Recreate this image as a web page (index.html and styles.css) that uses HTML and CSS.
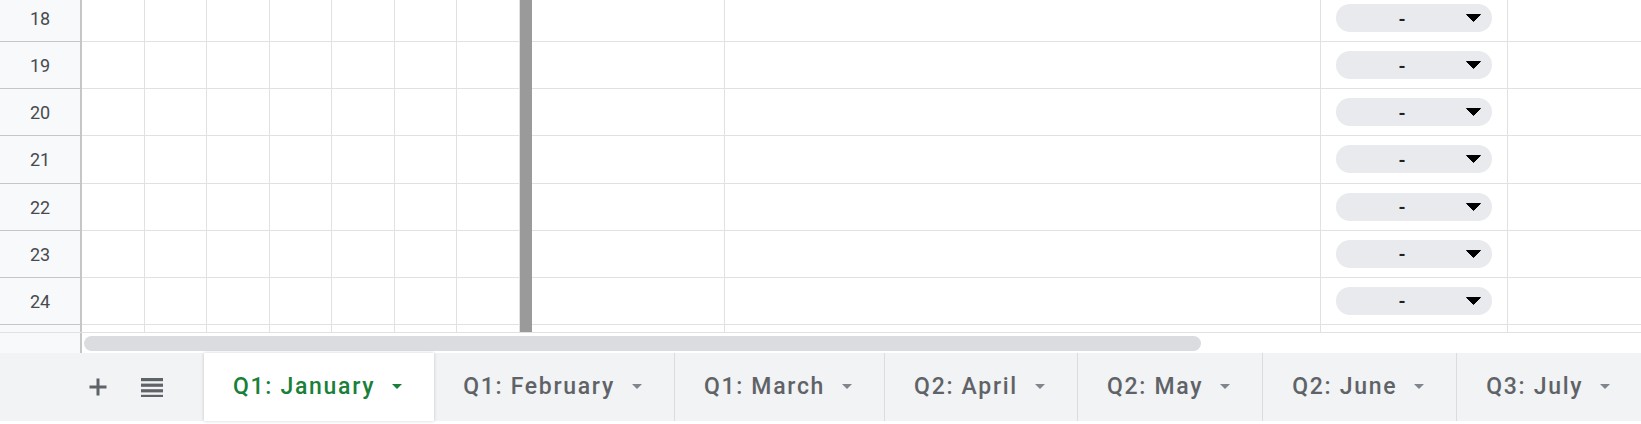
FILE: index.html
```html
<!DOCTYPE html>
<html>
<head>
<meta charset="utf-8">
<link rel="stylesheet" href="styles.css">
</head>
<body>
<div class="sheet">
  <div class="grid">
    <div class="row"><div class="rh">18</div><div class="c"></div><div class="c"></div><div class="c"></div><div class="c"></div><div class="c"></div><div class="c"></div><div class="c"></div><div class="freeze"></div><div class="c"></div><div class="c"></div><div class="c"><div class="chip"><span class="val">-</span><svg class="caret" width="15" height="8" viewBox="0 0 15 8"><path d="M0.5 0.5 L14.5 0.5 L7.5 7.5 Z" fill="#000" stroke="#000" stroke-linejoin="round"/></svg></div></div><div class="c last"></div></div>
    <div class="row"><div class="rh">19</div><div class="c"></div><div class="c"></div><div class="c"></div><div class="c"></div><div class="c"></div><div class="c"></div><div class="c"></div><div class="freeze"></div><div class="c"></div><div class="c"></div><div class="c"><div class="chip"><span class="val">-</span><svg class="caret" width="15" height="8" viewBox="0 0 15 8"><path d="M0.5 0.5 L14.5 0.5 L7.5 7.5 Z" fill="#000" stroke="#000" stroke-linejoin="round"/></svg></div></div><div class="c last"></div></div>
    <div class="row"><div class="rh">20</div><div class="c"></div><div class="c"></div><div class="c"></div><div class="c"></div><div class="c"></div><div class="c"></div><div class="c"></div><div class="freeze"></div><div class="c"></div><div class="c"></div><div class="c"><div class="chip"><span class="val">-</span><svg class="caret" width="15" height="8" viewBox="0 0 15 8"><path d="M0.5 0.5 L14.5 0.5 L7.5 7.5 Z" fill="#000" stroke="#000" stroke-linejoin="round"/></svg></div></div><div class="c last"></div></div>
    <div class="row"><div class="rh">21</div><div class="c"></div><div class="c"></div><div class="c"></div><div class="c"></div><div class="c"></div><div class="c"></div><div class="c"></div><div class="freeze"></div><div class="c"></div><div class="c"></div><div class="c"><div class="chip"><span class="val">-</span><svg class="caret" width="15" height="8" viewBox="0 0 15 8"><path d="M0.5 0.5 L14.5 0.5 L7.5 7.5 Z" fill="#000" stroke="#000" stroke-linejoin="round"/></svg></div></div><div class="c last"></div></div>
    <div class="row"><div class="rh">22</div><div class="c"></div><div class="c"></div><div class="c"></div><div class="c"></div><div class="c"></div><div class="c"></div><div class="c"></div><div class="freeze"></div><div class="c"></div><div class="c"></div><div class="c"><div class="chip"><span class="val">-</span><svg class="caret" width="15" height="8" viewBox="0 0 15 8"><path d="M0.5 0.5 L14.5 0.5 L7.5 7.5 Z" fill="#000" stroke="#000" stroke-linejoin="round"/></svg></div></div><div class="c last"></div></div>
    <div class="row"><div class="rh">23</div><div class="c"></div><div class="c"></div><div class="c"></div><div class="c"></div><div class="c"></div><div class="c"></div><div class="c"></div><div class="freeze"></div><div class="c"></div><div class="c"></div><div class="c"><div class="chip"><span class="val">-</span><svg class="caret" width="15" height="8" viewBox="0 0 15 8"><path d="M0.5 0.5 L14.5 0.5 L7.5 7.5 Z" fill="#000" stroke="#000" stroke-linejoin="round"/></svg></div></div><div class="c last"></div></div>
    <div class="row"><div class="rh">24</div><div class="c"></div><div class="c"></div><div class="c"></div><div class="c"></div><div class="c"></div><div class="c"></div><div class="c"></div><div class="freeze"></div><div class="c"></div><div class="c"></div><div class="c"><div class="chip"><span class="val">-</span><svg class="caret" width="15" height="8" viewBox="0 0 15 8"><path d="M0.5 0.5 L14.5 0.5 L7.5 7.5 Z" fill="#000" stroke="#000" stroke-linejoin="round"/></svg></div></div><div class="c last"></div></div>
    <div class="row partial"><div class="rh"></div><div class="c"></div><div class="c"></div><div class="c"></div><div class="c"></div><div class="c"></div><div class="c"></div><div class="c"></div><div class="freeze"></div><div class="c"></div><div class="c"></div><div class="c"></div><div class="c last"></div></div>
  </div>
  <div class="hscroll">
    <div class="corner"></div>
    <div class="track"><div class="thumb"></div></div>
  </div>
  <div class="tabbar">
    <div class="tools">
      <svg class="plus" width="20" height="20" viewBox="0 0 20 20"><path d="M10 1.5 V18.5 M1.5 10 H18.5" stroke="#5f6368" stroke-width="3" fill="none"/></svg>
      <svg class="list" width="22" height="20" viewBox="0 0 22 20"><rect x="0" y="1" width="22" height="3.2" fill="#5f6368"/><rect x="0" y="6.6" width="22" height="3.2" fill="#5f6368"/><rect x="0" y="12.2" width="22" height="3.2" fill="#5f6368"/><rect x="0" y="17.8" width="22" height="2.2" fill="#5f6368"/></svg>
    </div>
    <div class="tab active"><span class="tname">Q1: January</span><i class="arr"></i></div>
    <div class="tab"><span class="tname">Q1: February</span><i class="arr"></i></div>
    <div class="tab"><span class="tname">Q1: March</span><i class="arr"></i></div>
    <div class="tab"><span class="tname">Q2: April</span><i class="arr"></i></div>
    <div class="tab"><span class="tname">Q2: May</span><i class="arr"></i></div>
    <div class="tab"><span class="tname">Q2: June</span><i class="arr"></i></div>
    <div class="tab"><span class="tname">Q3: July</span><i class="arr"></i></div>
  </div>
</div>
</body>
</html>
```

FILE: styles.css
```css
* { box-sizing: border-box; }
html, body {
  margin: 0;
  padding: 0;
  background: #fff;
  width: 1641px;
  height: 424px;
  overflow: hidden;
  font-family: Roboto, "Liberation Sans", Arial, sans-serif;
}
.sheet {
  width: 1641px;
  height: 424px;
  display: flex;
  flex-direction: column;
  overflow: hidden;
}
.grid {
  margin-top: -5px;
  flex: none;
}
.row {
  display: grid;
  grid-template-columns: 82px repeat(7, 62.57px) 12px 193px 596px 187px 1fr;
  height: 47.15px;
}
.row.partial { height: 7px; }
.rh {
  background: #f8f9fa;
  border-right: 2px solid #c4c7c5;
  border-bottom: 1px solid #c4c7c5;
  display: flex;
  align-items: center;
  justify-content: center;
  font-size: 18px;
  color: #474a4e;
  padding-top: 1px;
}
.c {
  border-right: 1px solid #e1e1e1;
  border-bottom: 1px solid #e1e1e1;
  display: flex;
  align-items: center;
}
.c.last { border-right: none; }
.partial .rh, .partial .c { border-bottom: none; }
.freeze { background: #9a9a9a; }
.chip {
  margin-left: 15px;
  width: 156px;
  height: 28px;
  border-radius: 14px;
  background: #e9eaed;
  display: flex;
  align-items: center;
  padding-right: 11px;
}
.val {
  flex: 1;
  text-align: center;
  font-size: 18px;
  font-weight: 700;
  color: #202124;
  padding-left: 2px;
  padding-top: 2px;
}
.caret { display: block; }
.hscroll {
  height: 21px;
  border-top: 1px solid #e1e1e1;
  display: flex;
  flex: none;
}
.corner {
  width: 82px;
  background: #f8f9fa;
  border-right: 2px solid #c4c7c5;
}
.track {
  flex: 1;
  padding: 3px 0 0 2px;
}
.thumb {
  width: 1117px;
  height: 15px;
  border-radius: 8px;
  background: #dadce0;
}
.tabbar {
  height: 68px;
  background: #f1f3f4;
  display: flex;
  flex: none;
}
.tools {
  width: 204px;
  display: flex;
  align-items: center;
  padding-left: 88px;
  gap: 33px;
  flex: none;
}
.tools svg { display: block; }
.tab {
  display: flex;
  align-items: center;
  padding: 0 32px 0 29px;
  gap: 17px;
  border-right: 1px solid #dadce0;
  flex: none;
  color: #5f6368;
  font-size: 23px;
  font-weight: 500;
  letter-spacing: 1.7px;
}
.tab:last-child { border-right: none; }
.tab.active {
  background: #fff;
  color: #188038;
  box-shadow: 0 0 3px rgba(60,64,67,0.25);
  border-right: none;
  position: relative;
}
.arr {
  width: 0;
  height: 0;
  border-left: 5px solid transparent;
  border-right: 5px solid transparent;
  border-top: 5px solid #80868b;
}
.tab.active .arr { border-top-color: #188038; }
```
